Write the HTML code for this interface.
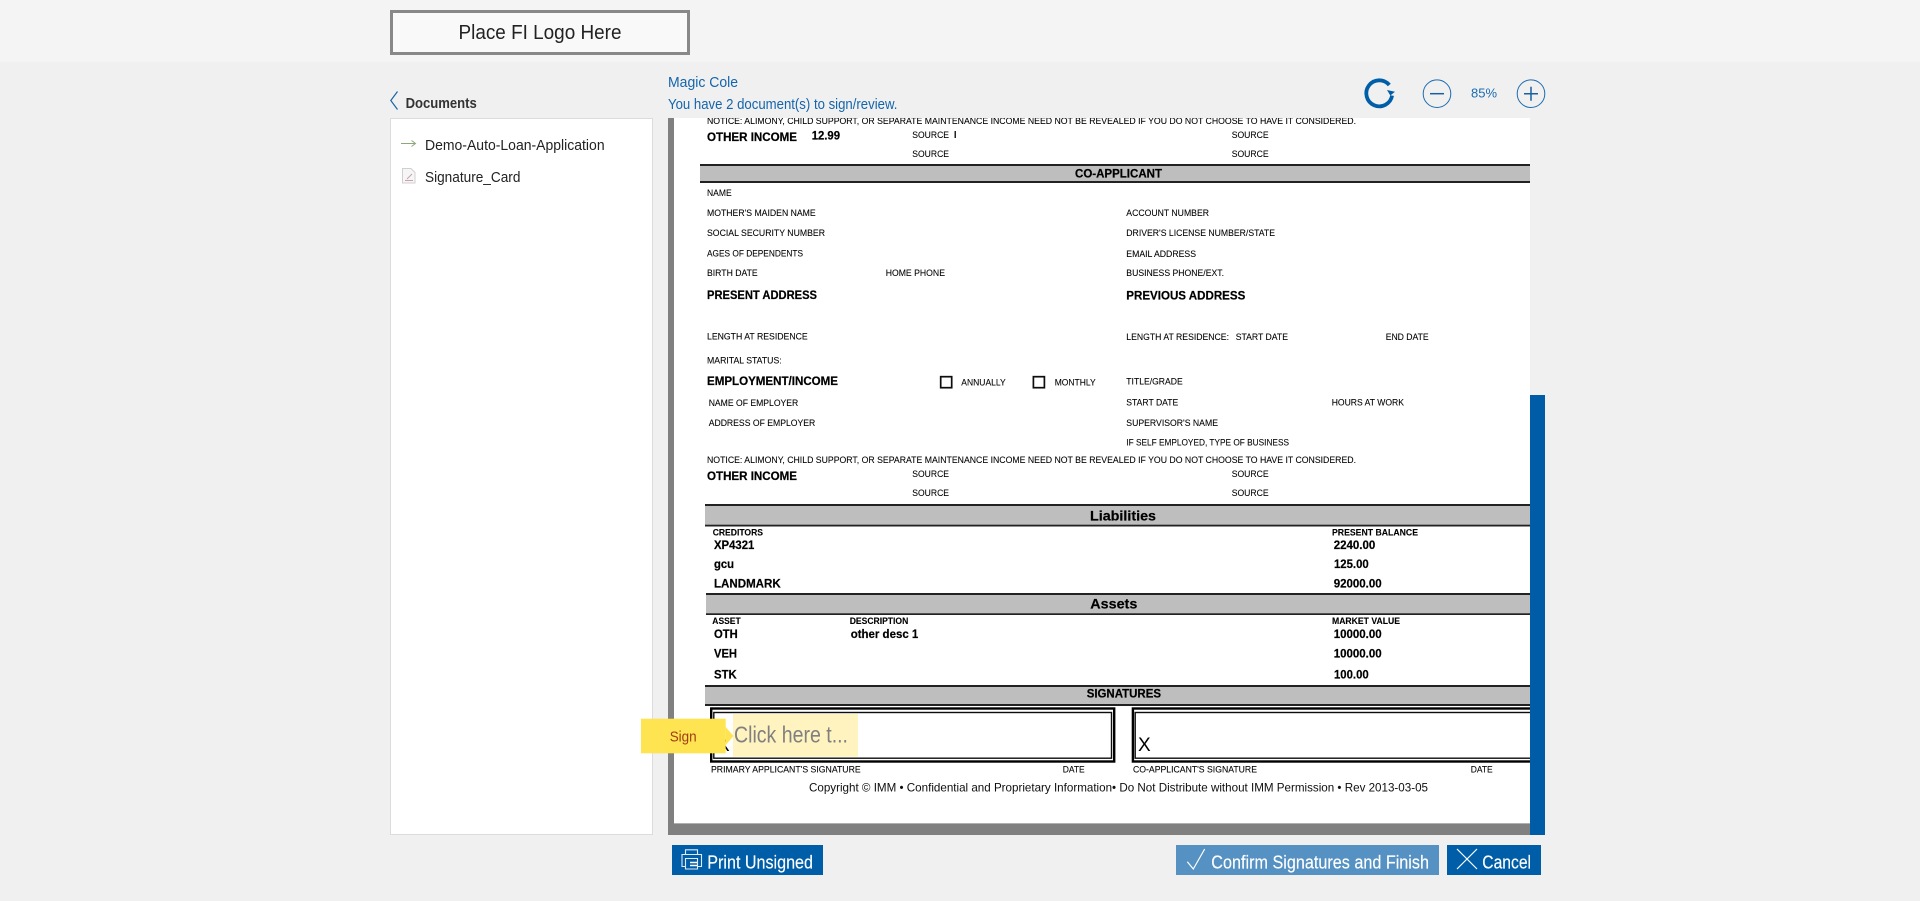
<!DOCTYPE html>
<html><head><meta charset="utf-8"><title>Documents</title>
<style>
html,body{margin:0;padding:0;width:1920px;height:901px;overflow:hidden;background:#f0f0f0}
svg{display:block;position:absolute;left:0;top:0}
text{font-family:"Liberation Sans",sans-serif;white-space:pre}
.s{font-size:9px;fill:#000;stroke:#000;stroke-width:.08px}
.b{font-size:11.5px;font-weight:bold;fill:#000;stroke:#000;stroke-width:.2px}
.h{font-size:11.8px;font-weight:bold;fill:#000;stroke:#000;stroke-width:.22px}
.t{font-size:14px;font-weight:bold;fill:#000;stroke:#000;stroke-width:.2px}
.c{font-size:8.8px;font-weight:bold;fill:#000;stroke:#000;stroke-width:.1px}
.u{font-size:14.4px;fill:#1465ac}
.l{font-size:15px;fill:#222}
.w{font-size:18px;fill:#fff;stroke:#fff;stroke-width:.15px}
</style></head><body>
<svg width="1920" height="901" viewBox="0 0 1920 901" xmlns="http://www.w3.org/2000/svg">
<defs>
<clipPath id="dc"><rect x="668" y="118" width="862" height="717"/></clipPath>
<filter id="bl" x="0" y="0" width="100%" height="100%"><feGaussianBlur stdDeviation="0.25"/></filter>
</defs>
<rect width="1920" height="901" fill="#f0f0f0"/>
<rect width="1920" height="62" fill="#f4f4f4"/>
<rect x="391.5" y="11.5" width="297" height="42" fill="#f9f9f9" stroke="#888" stroke-width="3"/>
<text x="458.5" y="39" font-size="20" fill="#222" textLength="163" lengthAdjust="spacingAndGlyphs">Place FI Logo Here</text>

<path d="M397.5 91.5 L390.8 100.5 L397.5 109.5" fill="none" stroke="#1a65a8" stroke-width="1.2"/>
<text x="405.6" y="108" font-size="14.4" font-weight="bold" fill="#333" textLength="71.2" lengthAdjust="spacingAndGlyphs">Documents</text>
<rect x="390.5" y="118.5" width="262" height="716" fill="#fff" stroke="#dcdcdc"/>
<path d="M401 143.5H415M411.5 140.5L415.5 143.5L411.5 146.5" fill="none" stroke="#8ea67c" stroke-width="1"/>
<text class="l" x="425" y="150" textLength="179.6" lengthAdjust="spacingAndGlyphs">Demo-Auto-Loan-Application</text>
<path d="M402.5 168.5H411L415 172.5V183H402.5Z" fill="#f6f6f6" stroke="#d0d0d0"/>
<path d="M405 180.5H413M407 179L412 174" fill="none" stroke="#c9a0a8" stroke-width="1"/>
<text class="l" x="425" y="182" textLength="95.4" lengthAdjust="spacingAndGlyphs">Signature_Card</text>

<text class="u" x="668" y="87" textLength="70" lengthAdjust="spacingAndGlyphs">Magic Cole</text>
<text class="u" x="668" y="109" textLength="229.4" lengthAdjust="spacingAndGlyphs">You have 2 document(s) to sign/review.</text>

<path d="M1392.1 95.6A13 13 0 1 1 1389.3 85" fill="none" stroke="#005ea8" stroke-width="3.8"/>
<path d="M1387 90L1395 91.7L1390.3 95.5Z" fill="#005ea8"/>
<circle cx="1437" cy="93.7" r="13.8" fill="none" stroke="#1a6bb0" stroke-width="1"/>
<path d="M1430 93.7H1444" stroke="#1a5f9f" stroke-width="1.5"/>
<text x="1471" y="97.3" font-size="13" fill="#1a6bb0" textLength="26" lengthAdjust="spacingAndGlyphs">85%</text>
<circle cx="1531" cy="93.7" r="13.8" fill="none" stroke="#1a6bb0" stroke-width="1"/>
<path d="M1524 93.7H1538M1531 86.7V100.7" stroke="#1a5f9f" stroke-width="1.5"/>

<rect x="668" y="118" width="862" height="717" fill="#808080"/>
<rect x="674" y="118" width="856" height="705" fill="#fff"/>
<rect x="674" y="823" width="856" height="1" fill="#b0b0b0"/>
<rect x="1530" y="395" width="15" height="440" fill="#005ca6"/>

<g clip-path="url(#dc)"><g filter="url(#bl)">
<text class="s" x="707" y="124" textLength="649" lengthAdjust="spacingAndGlyphs">NOTICE: ALIMONY, CHILD SUPPORT, OR SEPARATE MAINTENANCE INCOME NEED NOT BE REVEALED IF YOU DO NOT CHOOSE TO HAVE IT CONSIDERED.</text>
<text class="h" x="707" y="141" textLength="90" lengthAdjust="spacingAndGlyphs">OTHER INCOME</text>
<text class="b" x="811.7" y="139.3" textLength="28.3" lengthAdjust="spacingAndGlyphs">12.99</text>
<text class="s" x="912.3" y="138" textLength="36.7" lengthAdjust="spacingAndGlyphs">SOURCE</text>
<rect x="954.5" y="131" width="1.5" height="7" fill="#222"/>
<text class="s" x="912.3" y="157" textLength="36.7" lengthAdjust="spacingAndGlyphs">SOURCE</text>
<text class="s" x="1231.7" y="138" textLength="37" lengthAdjust="spacingAndGlyphs">SOURCE</text>
<text class="s" x="1231.7" y="157" textLength="37" lengthAdjust="spacingAndGlyphs">SOURCE</text>

<rect x="700" y="164" width="830" height="19" fill="#bebebe"/>
<rect x="700" y="164" width="830" height="2" fill="#222"/>
<rect x="700" y="181" width="830" height="2" fill="#222"/>
<text class="h" x="1075" y="177.7" textLength="87" lengthAdjust="spacingAndGlyphs">CO-APPLICANT</text>

<text class="s" x="707" y="196" textLength="24.7" lengthAdjust="spacingAndGlyphs">NAME</text>
<text class="s" x="707" y="216" textLength="108.7" lengthAdjust="spacingAndGlyphs">MOTHER'S MAIDEN NAME</text>
<text class="s" x="707" y="236" textLength="118" lengthAdjust="spacingAndGlyphs">SOCIAL SECURITY NUMBER</text>
<text class="s" x="707" y="256.3" textLength="96" lengthAdjust="spacingAndGlyphs">AGES OF DEPENDENTS</text>
<text class="s" x="707" y="276" textLength="50.7" lengthAdjust="spacingAndGlyphs">BIRTH DATE</text>
<text class="s" x="885.7" y="276" textLength="59.3" lengthAdjust="spacingAndGlyphs">HOME PHONE</text>
<text class="h" x="707" y="299" textLength="110" lengthAdjust="spacingAndGlyphs">PRESENT ADDRESS</text>
<text class="s" x="707" y="339.3" textLength="100.7" lengthAdjust="spacingAndGlyphs">LENGTH AT RESIDENCE</text>
<text class="s" x="1126.3" y="216" textLength="82.7" lengthAdjust="spacingAndGlyphs">ACCOUNT NUMBER</text>
<text class="s" x="1126.3" y="236" textLength="148.7" lengthAdjust="spacingAndGlyphs">DRIVER'S LICENSE NUMBER/STATE</text>
<text class="s" x="1126.3" y="257" textLength="69.7" lengthAdjust="spacingAndGlyphs">EMAIL ADDRESS</text>
<text class="s" x="1126.3" y="276" textLength="97.7" lengthAdjust="spacingAndGlyphs">BUSINESS PHONE/EXT.</text>
<text class="h" x="1126.3" y="299.7" textLength="119" lengthAdjust="spacingAndGlyphs">PREVIOUS ADDRESS</text>
<text class="s" x="1126.3" y="340" textLength="102.7" lengthAdjust="spacingAndGlyphs">LENGTH AT RESIDENCE:</text>
<text class="s" x="1235.7" y="340" textLength="52.3" lengthAdjust="spacingAndGlyphs">START DATE</text>
<text class="s" x="1385.7" y="340" textLength="43" lengthAdjust="spacingAndGlyphs">END DATE</text>

<text class="s" x="707" y="363.3" textLength="74.7" lengthAdjust="spacingAndGlyphs">MARITAL STATUS:</text>
<text class="h" x="707" y="385" textLength="131" lengthAdjust="spacingAndGlyphs">EMPLOYMENT/INCOME</text>
<rect x="940.7" y="376.7" width="11" height="11" fill="none" stroke="#111" stroke-width="1.7"/>
<text class="s" x="961.3" y="385.3" textLength="44.4" lengthAdjust="spacingAndGlyphs">ANNUALLY</text>
<rect x="1033.4" y="376.7" width="11" height="11" fill="none" stroke="#111" stroke-width="1.7"/>
<text class="s" x="1054.7" y="385.3" textLength="41" lengthAdjust="spacingAndGlyphs">MONTHLY</text>
<text class="s" x="1126.3" y="384.7" textLength="56.4" lengthAdjust="spacingAndGlyphs">TITLE/GRADE</text>
<text class="s" x="708.7" y="406" textLength="89.6" lengthAdjust="spacingAndGlyphs">NAME OF EMPLOYER</text>
<text class="s" x="1126.3" y="405.7" textLength="52" lengthAdjust="spacingAndGlyphs">START DATE</text>
<text class="s" x="1331.7" y="405.7" textLength="72.3" lengthAdjust="spacingAndGlyphs">HOURS AT WORK</text>
<text class="s" x="708.7" y="426" textLength="106.6" lengthAdjust="spacingAndGlyphs">ADDRESS OF EMPLOYER</text>
<text class="s" x="1126.3" y="426" textLength="91.7" lengthAdjust="spacingAndGlyphs">SUPERVISOR'S NAME</text>
<text class="s" x="1126.3" y="445.7" textLength="162.7" lengthAdjust="spacingAndGlyphs">IF SELF EMPLOYED, TYPE OF BUSINESS</text>
<text class="s" x="707" y="463" textLength="649" lengthAdjust="spacingAndGlyphs">NOTICE: ALIMONY, CHILD SUPPORT, OR SEPARATE MAINTENANCE INCOME NEED NOT BE REVEALED IF YOU DO NOT CHOOSE TO HAVE IT CONSIDERED.</text>
<text class="h" x="707" y="480" textLength="90" lengthAdjust="spacingAndGlyphs">OTHER INCOME</text>
<text class="s" x="912.3" y="477" textLength="36.7" lengthAdjust="spacingAndGlyphs">SOURCE</text>
<text class="s" x="912.3" y="496" textLength="36.7" lengthAdjust="spacingAndGlyphs">SOURCE</text>
<text class="s" x="1231.7" y="477" textLength="37" lengthAdjust="spacingAndGlyphs">SOURCE</text>
<text class="s" x="1231.7" y="496" textLength="37" lengthAdjust="spacingAndGlyphs">SOURCE</text>

<rect x="705" y="504" width="825" height="22.5" fill="#bebebe"/>
<rect x="705" y="504" width="825" height="2" fill="#222"/>
<rect x="705" y="524.7" width="825" height="1.8" fill="#222"/>
<text class="t" x="1090" y="520.3" textLength="66" lengthAdjust="spacingAndGlyphs">Liabilities</text>
<text class="c" x="712.7" y="535.7" textLength="50.3" lengthAdjust="spacingAndGlyphs">CREDITORS</text>
<text class="c" x="1332" y="535.7" textLength="86" lengthAdjust="spacingAndGlyphs">PRESENT BALANCE</text>
<text class="b" x="714" y="549" textLength="40.3" lengthAdjust="spacingAndGlyphs">XP4321</text>
<text class="b" x="1333.7" y="549" textLength="41.6" lengthAdjust="spacingAndGlyphs">2240.00</text>
<text class="b" x="714" y="568" textLength="20" lengthAdjust="spacingAndGlyphs">gcu</text>
<text class="b" x="1334" y="568" textLength="34.7" lengthAdjust="spacingAndGlyphs">125.00</text>
<text class="b" x="714" y="587.3" textLength="66.7" lengthAdjust="spacingAndGlyphs">LANDMARK</text>
<text class="b" x="1333.7" y="587.5" textLength="48" lengthAdjust="spacingAndGlyphs">92000.00</text>

<rect x="706" y="593" width="824" height="22" fill="#bebebe"/>
<rect x="706" y="593" width="824" height="2" fill="#222"/>
<rect x="706" y="613.3" width="824" height="1.7" fill="#222"/>
<text class="t" x="1090.3" y="608.7" textLength="47" lengthAdjust="spacingAndGlyphs">Assets</text>
<text class="c" x="712.3" y="624" textLength="28.4" lengthAdjust="spacingAndGlyphs">ASSET</text>
<text class="c" x="849.7" y="624" textLength="58.6" lengthAdjust="spacingAndGlyphs">DESCRIPTION</text>
<text class="c" x="1332" y="624" textLength="68" lengthAdjust="spacingAndGlyphs">MARKET VALUE</text>
<text class="b" x="714" y="638" textLength="23.7" lengthAdjust="spacingAndGlyphs">OTH</text>
<text class="b" x="850.7" y="638" textLength="67.6" lengthAdjust="spacingAndGlyphs">other desc 1</text>
<text class="b" x="1333.7" y="638" textLength="48" lengthAdjust="spacingAndGlyphs">10000.00</text>
<text class="b" x="714" y="657.7" textLength="23" lengthAdjust="spacingAndGlyphs">VEH</text>
<text class="b" x="1333.7" y="657.7" textLength="48" lengthAdjust="spacingAndGlyphs">10000.00</text>
<text class="b" x="714" y="678.7" textLength="22.7" lengthAdjust="spacingAndGlyphs">STK</text>
<text class="b" x="1334" y="678.7" textLength="34.7" lengthAdjust="spacingAndGlyphs">100.00</text>

<rect x="705" y="685" width="825" height="21" fill="#bebebe"/>
<rect x="705" y="685" width="825" height="2" fill="#222"/>
<rect x="705" y="704" width="825" height="2" fill="#222"/>
<text class="h" x="1086.7" y="697.3" textLength="74.3" lengthAdjust="spacingAndGlyphs">SIGNATURES</text>

<rect x="711.2" y="708.5" width="403" height="53" fill="none" stroke="#000" stroke-width="2.4"/>
<rect x="713.8" y="712.5" width="397.7" height="45.7" fill="#fff" stroke="#111" stroke-width="1.4"/>
<rect x="1132.9" y="708.5" width="410" height="53" fill="none" stroke="#000" stroke-width="2.4"/>
<rect x="1135.2" y="712.5" width="410" height="45.7" fill="#fff" stroke="#111" stroke-width="1.4"/>
<text x="717" y="751" font-size="19" fill="#000">X</text>
<text x="1138" y="751" font-size="19" fill="#000">X</text>
<text class="s" x="711" y="772.7" textLength="149.7" lengthAdjust="spacingAndGlyphs">PRIMARY APPLICANT'S SIGNATURE</text>
<text class="s" x="1062.7" y="772.7" textLength="22" lengthAdjust="spacingAndGlyphs">DATE</text>
<text class="s" x="1133" y="772.7" textLength="124" lengthAdjust="spacingAndGlyphs">CO-APPLICANT'S SIGNATURE</text>
<text class="s" x="1470.7" y="772.7" textLength="22" lengthAdjust="spacingAndGlyphs">DATE</text>
<text x="809" y="791.3" font-size="12" fill="#111" textLength="619" lengthAdjust="spacingAndGlyphs">Copyright © IMM • Confidential and Proprietary Information• Do Not Distribute without IMM Permission • Rev 2013-03-05</text>
</g></g>

<rect x="733" y="714" width="125" height="42.7" fill="#fff4bf"/>
<text x="734" y="742.7" font-size="23" fill="#808080" textLength="114" lengthAdjust="spacingAndGlyphs">Click here t...</text>
<rect x="641" y="718.7" width="84.7" height="34.6" fill="#ffe451"/>
<path d="M725.7 727L733.5 736L725.7 745Z" fill="#ffe451"/>
<text x="669.7" y="741.7" font-size="14.5" fill="#a03c14" textLength="27" lengthAdjust="spacingAndGlyphs">Sign</text>

<rect x="672" y="845" width="151" height="30" fill="#005ea8"/>
<g fill="none" stroke="#dfeaf5" stroke-width="1.1">
<path d="M685.5 854V849.8H697.5V854"/>
<path d="M685.5 866.5H682V854.5H701.5V866.5H697.5"/>
<path d="M685.5 858.5H697.5V869H685.5Z"/>
</g>
<path d="M690 862.5H697M690 865.5H697" stroke="#fff" stroke-width="1.4"/>
<text class="w" x="707.3" y="868.3" textLength="105.7" lengthAdjust="spacingAndGlyphs">Print Unsigned</text>

<rect x="1176" y="845" width="263" height="30" fill="#5591c2"/>
<path d="M1187.3 861.7L1193.3 869L1204.7 849" fill="none" stroke="#fff" stroke-width="1.2"/>
<text class="w" x="1211.3" y="868.3" textLength="217.7" lengthAdjust="spacingAndGlyphs">Confirm Signatures and Finish</text>

<rect x="1447" y="845" width="94" height="30" fill="#005ea8"/>
<path d="M1457 849L1477 869M1477 849L1457 869" fill="none" stroke="#fff" stroke-width="1.2"/>
<text class="w" x="1482.3" y="868.3" textLength="48.7" lengthAdjust="spacingAndGlyphs">Cancel</text>
</svg>
</body></html>
